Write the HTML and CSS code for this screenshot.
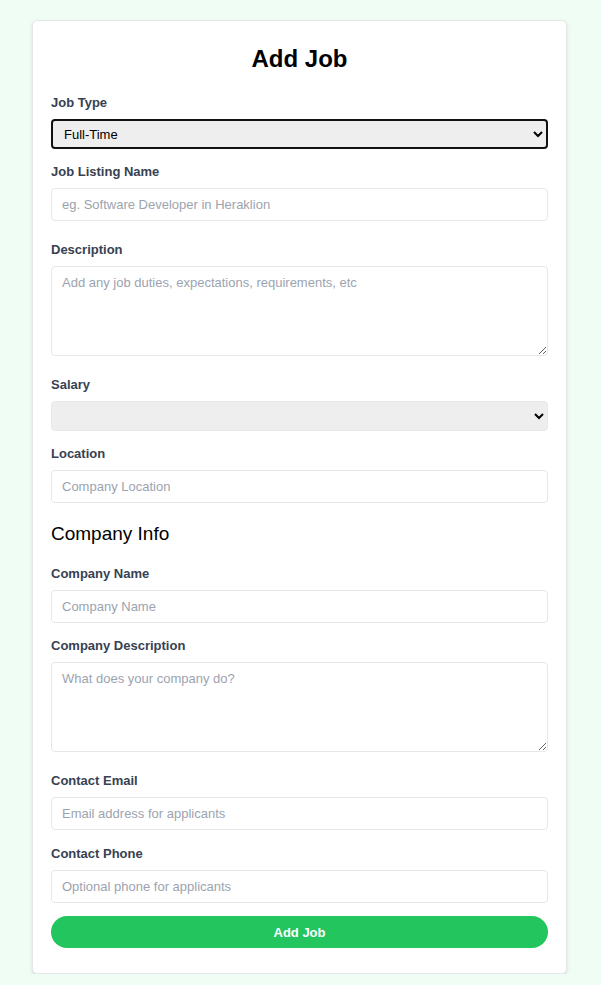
FILE: index.html
```html
<!DOCTYPE html>
<html lang="en">
<head>
<meta charset="utf-8">
<title>Add Job</title>
<link rel="stylesheet" href="styles.css">
</head>
<body>
<main class="page">
  <form class="card">
    <h2 class="title">Add Job</h2>

    <div class="field field-select">
      <label class="label" for="type">Job Type</label>
      <select id="type" class="control select select-focus">
        <option>Full-Time</option>
        <option>Part-Time</option>
        <option>Remote</option>
        <option>Internship</option>
      </select>
    </div>

    <div class="field field-wide">
      <label class="label" for="name">Job Listing Name</label>
      <input id="name" class="control input" type="text" placeholder="eg. Software Developer in Heraklion">
    </div>

    <div class="field field-area">
      <label class="label" for="desc">Description</label>
      <textarea id="desc" class="control textarea" placeholder="Add any job duties, expectations, requirements, etc"></textarea>
    </div>

    <div class="field field-select">
      <label class="label" for="salary">Salary</label>
      <select id="salary" class="control select">
        <option></option>
      </select>
    </div>

    <div class="field field-last">
      <label class="label" for="loc">Location</label>
      <input id="loc" class="control input" type="text" placeholder="Company Location">
    </div>

    <h3 class="section">Company Info</h3>

    <div class="field">
      <label class="label" for="cname">Company Name</label>
      <input id="cname" class="control input" type="text" placeholder="Company Name">
    </div>

    <div class="field field-area">
      <label class="label" for="cdesc">Company Description</label>
      <textarea id="cdesc" class="control textarea" placeholder="What does your company do?"></textarea>
    </div>

    <div class="field field-email">
      <label class="label" for="email">Contact Email</label>
      <input id="email" class="control input" type="email" placeholder="Email address for applicants">
    </div>

    <div class="field field-phone">
      <label class="label" for="phone">Contact Phone</label>
      <input id="phone" class="control input" type="tel" placeholder="Optional phone for applicants">
    </div>

    <button class="submit" type="submit">Add Job</button>
  </form>
</main>
</body>
</html>
```

FILE: styles.css
```css
* {
  box-sizing: border-box;
}

html, body {
  margin: 0;
  padding: 0;
}

body {
  background: #f0fdf4;
  font-family: "Liberation Sans", Arial, sans-serif;
  color: #111827;
}

.page {
  padding: 20px 34px 0 32px;
}

.card {
  display: block;
  background: #ffffff;
  border: 1px solid #e5e7eb;
  border-radius: 5px;
  box-shadow: 0 2px 5px rgba(0, 0, 0, 0.08), 0 1px 2px rgba(0, 0, 0, 0.05);
  padding: 22px 18px 25px 18px;
}

.title {
  margin: 0 0 20px 0;
  font-size: 24px;
  line-height: 32px;
  font-weight: 700;
  text-align: center;
  color: #000;
}

.section {
  margin: 19px 0 20px 0;
  font-size: 19px;
  line-height: 24px;
  font-weight: 400;
  color: #000;
}

.field {
  margin-bottom: 15px;
}

.field-select {
  margin-bottom: 15px;
}

.field-wide {
  margin-bottom: 21px;
}

.field-area {
  margin-bottom: 21px;
}

.field-last {
  margin-bottom: 0;
}

.field-email {
  margin-bottom: 16px;
}

.field-phone {
  margin-bottom: 13px;
}

.label {
  display: block;
  font-size: 13px;
  line-height: 16px;
  font-weight: 700;
  color: #374151;
  margin-bottom: 8px;
}

.control {
  display: block;
  width: 100%;
  margin: 0;
  font-family: "Liberation Sans", Arial, sans-serif;
  font-size: 13px;
  color: #111;
  border: 1px solid #e5e7eb;
  border-radius: 4px;
  background: #fff;
  outline: none;
}

.control::placeholder {
  color: #9ca3af;
  opacity: 1;
}

.input {
  height: 33px;
  padding: 0 10px;
}

.textarea {
  height: 90px;
  padding: 8px 10px;
  line-height: 16px;
  resize: vertical;
}

.select {
  height: 30px;
  padding: 0 8px 0 7px;
  background-color: #eeeeee;
  color: #000;
}

.select-focus {
  border: 2px solid #111;
}

.submit {
  display: block;
  width: 100%;
  height: 32px;
  margin: 0;
  border: none;
  border-radius: 999px;
  background: #22c55e;
  color: #fff;
  font-family: "Liberation Sans", Arial, sans-serif;
  font-size: 13px;
  font-weight: 700;
  cursor: pointer;
}
```
